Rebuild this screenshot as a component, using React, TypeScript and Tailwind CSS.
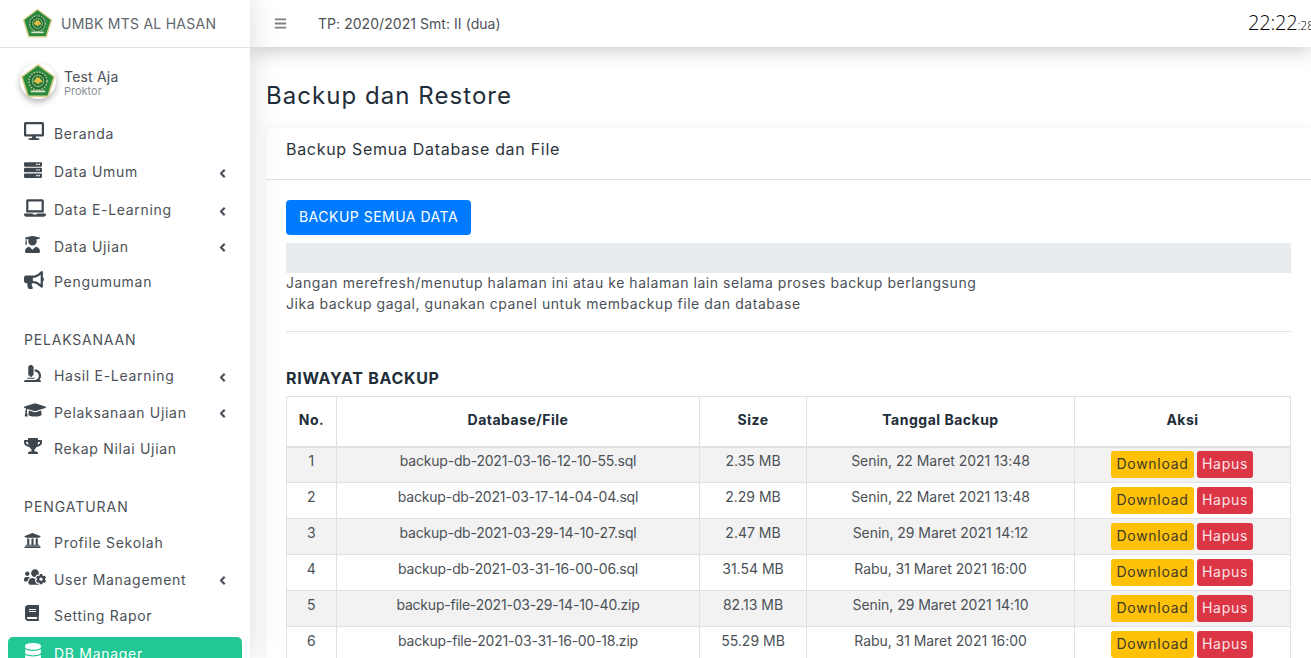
import React from "react";
import {
  FaBars,
  FaBook,
  FaBullhorn,
  FaChevronLeft,
  FaDatabase,
  FaDesktop,
  FaGraduationCap,
  FaLaptop,
  FaMicroscope,
  FaServer,
  FaTrophy,
  FaUniversity,
  FaUserGraduate,
  FaUsersCog,
} from "react-icons/fa";

const Logo = ({ className }: { className: string }) => (
  <svg viewBox="0 0 40 40" className={className}>
    <polygon points="20,1 39,15 32,38 8,38 1,15" fill="#d9cf8e" />
    <polygon points="20,3 37,15.5 30.5,36 9.5,36 3,15.5" fill="#2a8a3e" />
    <circle cx="20" cy="20" r="11" fill="#1d6a31" />
    <circle cx="20" cy="20" r="10" fill="none" stroke="#b9cfa0" strokeWidth="1.6" strokeDasharray="2 1.2" />
    <circle cx="20" cy="20" r="6.5" fill="#2a7d3a" stroke="#cfdcae" strokeWidth="0.8" />
    <path d="M15 21c2 0 3.500 1 5 2.500 1.500-1.500 3-2.500 5-2.500-1-2.500-2.500-3.500-3.500-5h-3c-1 1.500-2.500 2.500-3.500 5z" fill="#e3bb45" />
    <path d="M12 31.500h16" stroke="#dfe6c8" strokeWidth="2" />
  </svg>
);

type Item = { label: string; icon: React.ReactNode; arrow?: boolean; h: string };

const iconCls = "text-[#3f474e]";

const menu1: Item[] = [
  { label: "Beranda", icon: <FaDesktop size={20} className={iconCls} />, h: "h-[38px]" },
  { label: "Data Umum", icon: <FaServer size={18} className={iconCls} />, arrow: true, h: "h-[39px]" },
  { label: "Data E-Learning", icon: <FaLaptop size={22} className={iconCls} />, arrow: true, h: "h-[37px]" },
  { label: "Data Ujian", icon: <FaUserGraduate size={17} className={iconCls} />, arrow: true, h: "h-[36px]" },
  { label: "Pengumuman", icon: <FaBullhorn size={20} className={iconCls} />, h: "h-[35px]" },
];
const menu2: Item[] = [
  { label: "Hasil E-Learning", icon: <FaMicroscope size={17} className={iconCls} />, arrow: true, h: "h-[37px]" },
  { label: "Pelaksanaan Ujian", icon: <FaGraduationCap size={22} className={iconCls} />, arrow: true, h: "h-[36px]" },
  { label: "Rekap Nilai Ujian", icon: <FaTrophy size={18} className={iconCls} />, h: "h-[36px]" },
];
const menu3: Item[] = [
  { label: "Profile Sekolah", icon: <FaUniversity size={17} className={iconCls} />, h: "h-[37px]" },
  { label: "User Management", icon: <FaUsersCog size={22} className={iconCls} />, arrow: true, h: "h-[36px]" },
  { label: "Setting Rapor", icon: <FaBook size={16} className={iconCls} />, h: "h-[36px]" },
];

const rows = [
  ["1", "backup-db-2021-03-16-12-10-55.sql", "2.35 MB", "Senin, 22 Maret 2021 13:48"],
  ["2", "backup-db-2021-03-17-14-04-04.sql", "2.29 MB", "Senin, 22 Maret 2021 13:48"],
  ["3", "backup-db-2021-03-29-14-10-27.sql", "2.47 MB", "Senin, 29 Maret 2021 14:12"],
  ["4", "backup-db-2021-03-31-16-00-06.sql", "31.54 MB", "Rabu, 31 Maret 2021 16:00"],
  ["5", "backup-file-2021-03-29-14-10-40.zip", "82.13 MB", "Senin, 29 Maret 2021 14:10"],
  ["6", "backup-file-2021-03-31-16-00-18.zip", "55.29 MB", "Rabu, 31 Maret 2021 16:00"],
];

const cellTracking = ["tracking-[0.3px]", "tracking-[-0.2px]", "tracking-[0px]", "tracking-[-0.05px]"];

const MenuRow = ({ item }: { item: Item }) => (
  <div className={`flex items-center pl-6 pr-[23px] ${item.h}`}>
    <div className="w-[30px] flex justify-start -translate-y-[2px]">{item.icon}</div>
    <span className="grow tracking-[0.7px]">{item.label}</span>
    {item.arrow && (
      <FaChevronLeft size={9} stroke="currentColor" strokeWidth={50} className="text-[#3a4148] mt-[3px]" />
    )}
  </div>
);

export default function App() {
  return (
    <div className="flex h-[658px] w-[1311px] overflow-hidden bg-white font-['Inter','Liberation_Sans',sans-serif] text-[14px] text-[#4b5157]">
      <aside className="relative z-20 w-[250px] shrink-0 bg-white shadow-[0_0_28px_rgba(0,0,0,0.15)]">
        <div className="flex h-[48px] items-center border-b border-[#dee2e6] pl-[22px]">
          <Logo className="h-[31px] w-[31px]" />
          <span className="ml-[8px] tracking-[0.25px] text-[#62676c]">UMBK MTS AL HASAN</span>
        </div>

        <div className="flex h-[66px] items-center pl-[20px]">
          <Logo className="h-[36px] w-[36px] rounded-full shadow-[0_3px_6px_rgba(0,0,0,0.3)]" />
          <div className="ml-[8px] mt-[2px]">
            <div className="leading-[17px] tracking-[0.2px]">Test Aja</div>
            <div className="text-[11px] leading-[12px] text-[#8a9096]">Proktor</div>
          </div>
        </div>

        <div>
          {menu1.map((m) => (
            <MenuRow key={m.label} item={m} />
          ))}
        </div>

        <div className="mt-[22px] flex h-[36px] items-center pl-6 tracking-[0.8px]">PELAKSANAAN</div>
        <div>
          {menu2.map((m) => (
            <MenuRow key={m.label} item={m} />
          ))}
        </div>

        <div className="mt-[22px] flex h-[36px] items-center pl-6 tracking-[0.95px]">PENGATURAN</div>
        <div>
          {menu3.map((m) => (
            <MenuRow key={m.label} item={m} />
          ))}
        </div>

        <div className="mx-[8px] mt-[4px] flex h-[40px] items-start rounded-[5px] bg-[#23c795] pl-4 pt-[6px] text-white">
          <FaDatabase size={18} className="w-[30px] pr-[12px]" />
          <span className="tracking-[0.7px]">DB Manager</span>
        </div>
      </aside>

      <main className="flex min-w-0 grow flex-col bg-white">
        <header className="relative z-10 flex h-[47px] shrink-0 items-center bg-white pl-[24px] shadow-[0_3px_20px_rgba(0,0,0,0.22)]">
          <FaBars size={13} className="text-[#7b8085]" />
          <span className="ml-[31px] tracking-[0.05px] text-[#4b5157]">TP: 2020/2021 Smt: II (dua)</span>
          <div className="ml-auto w-[63px] overflow-hidden whitespace-nowrap pb-[2px] font-['Open_Sans',sans-serif] font-light text-black">
            <span className="text-[20px] tracking-[-0.2px]">22:22</span>
            <span className="text-[12px]">:28</span>
          </div>
        </header>

        <div className="pl-4">
          <h1 className="mt-[33px] text-[24px] font-normal leading-[32px] tracking-[1.05px] text-[#212d38]">
            Backup dan Restore
          </h1>

          <section className="mt-[16px] rounded-l-[5px] bg-white shadow-[0_0_12px_rgba(0,0,0,0.05)]">
            <div className="flex h-[52px] items-center border-b border-[#dee2e6] pb-[10px] pl-5 text-[16px] tracking-[0.7px] text-[#2c343b]">
              Backup Semua Database dan File
            </div>

            <div className="px-5 pt-5">
              <button className="h-[35px] w-[185px] rounded-[4px] bg-[#007bff] pb-[2px] text-[14px] tracking-[0.5px] text-white">
                BACKUP SEMUA DATA
              </button>
              <div className="mt-2 h-[30px] bg-[#e9ecef]" />
              <p className="-mt-px leading-[21px] tracking-[0.55px]">
                Jangan merefresh/menutup halaman ini atau ke halaman lain selama proses backup berlangsung
                <br />
                Jika backup gagal, gunakan cpanel untuk membackup file dan database
              </p>
              <hr className="mt-[17px] border-[#e1e4e7]" />

              <h2 className="mt-[36px] text-[16px] font-bold leading-[20px] tracking-[0.7px] text-[#212d38]">
                RIWAYAT BACKUP
              </h2>

              <table className="mt-[8px] w-[1004px] table-fixed border-collapse text-center">
                <colgroup>
                  <col className="w-[50px]" />
                  <col className="w-[363px]" />
                  <col className="w-[107px]" />
                  <col className="w-[268px]" />
                  <col className="w-[216px]" />
                </colgroup>
                <thead>
                  <tr className="h-[50px] font-bold text-[#212d38]">
                    {["No.", "Database/File", "Size", "Tanggal Backup", "Aksi"].map((t) => (
                      <th key={t} className="border border-b-2 border-[#dee2e6] pb-[4px] font-bold tracking-[0.5px]">
                        {t}
                      </th>
                    ))}
                  </tr>
                </thead>
                <tbody>
                  {rows.map((r) => (
                    <tr key={r[0]} className="h-[36px] odd:bg-[#f2f2f2]">
                      {r.map((c, i) => (
                        <td key={i} className={`border border-[#dee2e6] pb-[8px] ${cellTracking[i]}`}>
                          {c}
                        </td>
                      ))}
                      <td className="border border-[#dee2e6]">
                        <div className="flex justify-center gap-[3px] pr-[1px]">
                          <button className="h-[27px] w-[83px] rounded-[3px] bg-[#ffc107] pb-[2px] tracking-[0.7px] text-[#3c3a2c]">
                            Download
                          </button>
                          <button className="h-[27px] w-[56px] rounded-[3px] bg-[#dc3545] pb-[2px] tracking-[0.7px] text-[#fbe3e5]">
                            Hapus
                          </button>
                        </div>
                      </td>
                    </tr>
                  ))}
                </tbody>
              </table>
            </div>
          </section>
        </div>
      </main>
    </div>
  );
}
